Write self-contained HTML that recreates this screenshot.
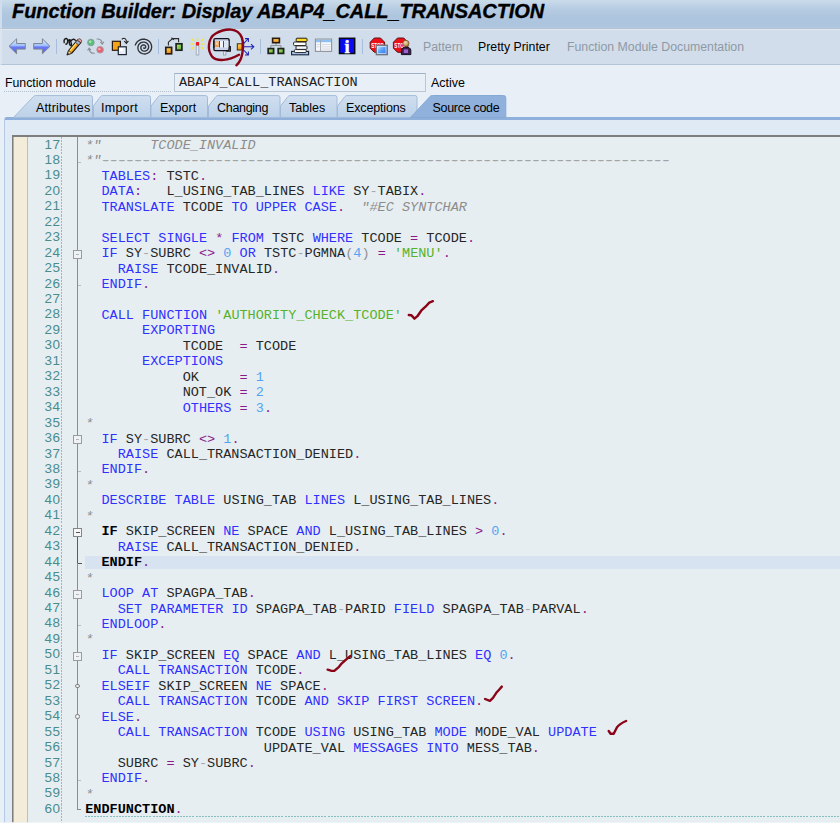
<!DOCTYPE html>
<html><head><meta charset="utf-8"><title>Function Builder: Display ABAP4_CALL_TRANSACTION</title>
<style>
*{box-sizing:border-box;margin:0;padding:0}
html,body{width:840px;height:823px;overflow:hidden}
body{position:relative;background:#e8eff6;font-family:"Liberation Sans",sans-serif;font-size:12px;color:#000}
.abs{position:absolute}
#title{position:absolute;left:0;top:0;width:840px;height:29px;background:linear-gradient(#cadcea 0%,#c2d5e7 14%,#b6cce3 32%,#afc6df 55%,#adc4de 94%,#b6cbe1 100%);border-bottom:1px solid #b2c2d3;border-left:2px solid #cfdded}
#title h1{position:absolute;left:10px;top:-3px;font:italic bold 20px/28px "Liberation Sans",sans-serif;white-space:nowrap;letter-spacing:-0.08px;-webkit-text-stroke:0.35px #000}
#tb{position:absolute;left:0;top:29px;width:840px;height:36px;background:#d1ddea;border-top:1px solid #e0e9f2;border-bottom:1px solid #b4c4d8;border-left:2px solid #dbe4ef}
#tb .sep{position:absolute;top:9px;width:1px;height:16px;background:#a8bcd6}
#tb svg{position:absolute;top:8px;overflow:visible}
#tb .t{position:absolute;top:9px;margin-left:-2px;font-size:12.3px;line-height:16px;white-space:nowrap}
.gray{color:#8f99a6}
#fm{position:absolute;left:5px;top:75px;font-size:12.3px;line-height:16px}
#fmline{position:absolute;left:4px;top:91px;width:167px;height:0;border-top:1px dotted #b4bfcc}
#inp{position:absolute;left:174px;top:73px;width:252px;height:19px;border:1px solid #b9c6d6;border-top-color:#9fb0c6;background:#e9eff6;font:13.54px/17px "Liberation Mono",monospace;padding-left:4px;color:#222}
#act{position:absolute;left:431px;top:75px;font-size:12.5px;line-height:16px}
#tabs{position:absolute;left:0;top:95px;width:840px;height:26px}
#tabs .tx{position:absolute;top:5px;font-size:12.5px;line-height:16px;white-space:nowrap}
#panel{position:absolute;left:4px;top:117px;width:840px;height:710px;background:#dfeaf5;border-top:3px solid #8fb0da;border-left:1px solid #b3c9e4;border-top-left-radius:3px}
#ed{position:absolute;left:12px;top:135px;width:835px;height:700px;background:#e7eef1;border-top:2px solid #7e7e7e;border-left:1px solid #7e7e7e}
#beige{position:absolute;left:13px;top:137px;width:15px;border-left:1px solid #b5b0a4;height:700px;background:#f3ecd8;border-right:1px solid #bebeba}
#dots{position:absolute;left:61px;top:137px;width:1px;height:700px;background:repeating-linear-gradient(to bottom,#8ac3be 0,#8ac3be 2px,transparent 2px,transparent 3.1px)}
#vline{position:absolute;left:77px;top:137px;width:1px;height:calc(808.6px - 137px);background:#8c8c8c}
.ln{position:absolute;left:28px;width:32.3px;margin-top:-1.5px;height:15px;text-align:right;font:13.5px/15px "Liberation Sans",sans-serif;color:#4a8c8c;letter-spacing:0.4px}
.cl{position:absolute;left:85.2px;height:15px;font:13.54px/15px "Liberation Mono",monospace;color:#262626;white-space:pre}
.cl .k{color:#3030ff}
.cl .p{color:#8a1a8a;font-style:normal}
.cl .r{color:#8e9294;font-style:normal}
.cl .n{color:#55a4f2;text-decoration:none}
.cl .h{color:#a4a8aa}
.cl .s{color:#56b22a;text-decoration:none}
.cl i{color:#8c8c8c;font-style:italic}
.cl i.d{position:relative;top:0px;font-style:normal;color:#a2a5a7;text-shadow:1px 0 0 #a2a5a7,-0.8px 0 0 #a2a5a7}
.cl b{color:#000;font-weight:bold}
.curbg{position:absolute;left:85px;width:760px;height:13px;margin-top:1px;background:#d8e3f1}
.fbox{position:absolute;left:73px;width:9px;height:9px;border:1px solid #9c9c9c;background:#eef2f4}
.fbox span{position:absolute;left:2px;top:3px;width:3px;height:1px;background:#b5b5b5}
.fbox.act{border-color:#858585;background:#f4f6f8}
.fbox.act span{left:1.5px;width:4px;background:#555}
.ftick.act{background:#555;width:3.5px}
#vact{position:absolute;left:77px;width:1px;background:#5c5c5c}
.ftick{position:absolute;left:78px;width:3px;height:1px;background:#b9bdbf}
.fdia{position:absolute;left:75.3px;width:4.4px;height:4.4px;border:1px solid #808080;border-radius:50%;background:#eef2f4}
#endl{position:absolute;left:77px;width:4px;height:1px;background:#8a8a8a}
#bdash{position:absolute;left:85px;top:816px;width:760px;height:1px;background:repeating-linear-gradient(to right,#86c0bc 0,#86c0bc 2px,transparent 2px,transparent 3.07px)}
#bot{position:absolute;left:0;top:822px;width:840px;height:1px;background:#f1f5f8;opacity:.8}
</style></head><body>
<div id="title"><h1>Function Builder: Display ABAP4_CALL_TRANSACTION</h1></div>
<div id="tb">
<span class="t gray" style="left:423px">Pattern</span>
<span class="t" style="left:478px">Pretty Printer</span>
<span class="t gray" style="left:567px">Function Module Documentation</span>
</div>
<svg id="ic" class="abs" style="left:0;top:0" width="840" height="70" viewBox="0 0 840 70">
<defs>
<linearGradient id="ga" x1="0" y1="0" x2="0" y2="1"><stop offset="0" stop-color="#dfeaff"/><stop offset=".45" stop-color="#9fc2fb"/><stop offset=".55" stop-color="#6a78f4"/><stop offset="1" stop-color="#5a62ee"/></linearGradient>
<linearGradient id="gor" x1="0" y1="0" x2="0" y2="1"><stop offset="0" stop-color="#ffd85a"/><stop offset="1" stop-color="#f08a10"/></linearGradient>
<linearGradient id="ggr" x1="0" y1="0" x2="1" y2="1"><stop offset="0" stop-color="#c5ec6a"/><stop offset="1" stop-color="#4aa838"/></linearGradient>
<linearGradient id="gsc" x1="0" y1="0" x2="1" y2="1"><stop offset="0" stop-color="#e8f4ff"/><stop offset=".5" stop-color="#5aa0f8"/><stop offset="1" stop-color="#2a6ae8"/></linearGradient>
<radialGradient id="ghd" cx=".4" cy=".35" r=".7"><stop offset="0" stop-color="#f6dcae"/><stop offset="1" stop-color="#a87c40"/></radialGradient>
</defs>
<g stroke="#a6bddb" stroke-width="1"><line x1="56.5" y1="39" x2="56.5" y2="54"/><line x1="158.5" y1="39" x2="158.5" y2="54"/><line x1="260.5" y1="39" x2="260.5" y2="54"/><line x1="362.5" y1="39" x2="362.5" y2="54"/></g>
<!-- back / forward -->
<path d="M9 46.3 L16.6 38.8 V43.5 H25.3 V49.1 H16.6 V53.8 Z" fill="url(#ga)" stroke="#7c8694" stroke-width="1" stroke-linejoin="round"/>
<path d="M50 46.3 L42.4 38.8 V43.5 H33.7 V49.1 H42.4 V53.8 Z" fill="url(#ga)" stroke="#7c8694" stroke-width="1" stroke-linejoin="round"/>
<!-- pencil with glasses -->
<g>
<path d="M64.2 42.5 c-1-3.5 2.2-5.2 3.2-3 c1 2.2-.4 5-1.6 4.6 M68 40.8 c.8-1.6 2.4-1.4 2.9.2 M70.6 41 c.6 2 1.4 4 .6 4.6 c-1.2.6-2.4-2.4-1.8-4.6 M71.3 40.5 c1.4-1.8 3.4-1.4 4-.2" fill="none" stroke="#1c1c1c" stroke-width="1.45" stroke-linecap="round"/>
<path d="M67.2 54.8 L68.6 50.6 L77.4 40.2 L80.8 42.6 L71.8 53.2 Z" fill="#f6a61c" stroke="#20160a" stroke-width="1.2" stroke-linejoin="round"/>
<path d="M69.4 50.2 L77.4 40.8 L78.5 41.6 L70.4 51.1 Z" fill="#ffe36a"/>
<path d="M75.4 42.6 L77.4 40.2 L80.8 42.6 L78.8 45 Z" fill="#9db4d8" stroke="#3a2a14" stroke-width=".7"/>
<path d="M77.4 40.2 L78.6 38.9 C79.8 38.2 81.8 39.8 81.6 41.2 L80.8 42.6 Z" fill="#f0a0a8" stroke="#3a2a14" stroke-width=".7"/>
<path d="M67.2 54.8 L68.6 50.6 L71.8 53.2 Z" fill="#f1d9a6" stroke="#3a2a14" stroke-width=".7"/>
<path d="M67.2 54.8 L67.8 53 L69.2 54.1 Z" fill="#111"/>
</g>
<!-- circles -->
<g>
<circle cx="90.9" cy="42.5" r="3.3" fill="#58bf76" stroke="#86a09c" stroke-width="1"/>
<circle cx="90.2" cy="41.8" r="1.2" fill="#a6e6b0"/>
<circle cx="100.1" cy="49.8" r="3.3" fill="#e85f70" stroke="#ad9aa2" stroke-width="1"/>
<circle cx="99.4" cy="49.1" r="1.2" fill="#f8b8c0"/>
<path d="M96.6 39 c3.2-.2 5.4 1.6 5.6 4.4" fill="none" stroke="#8a8f96" stroke-width="1.1"/>
<path d="M100.4 42.2 l1.9 2 l1.5-2.4" fill="none" stroke="#8a8f96" stroke-width="1.1"/>
<path d="M94.8 53.3 c-3.2.2-5.4-1.6-5.6-4.4" fill="none" stroke="#8a8f96" stroke-width="1.1"/>
<path d="M91 50.1 l-1.9-2 l-1.5 2.4" fill="none" stroke="#8a8f96" stroke-width="1.1"/>
</g>
<!-- squares -->
<g>
<rect x="112.4" y="41.3" width="8" height="9" fill="#f6a31a" stroke="#2a1c12" stroke-width="1.2"/>
<rect x="118.3" y="46.8" width="8" height="7.8" fill="#e4effb" stroke="#20242e" stroke-width="1.2"/>
<rect x="119.5" y="48" width="3.5" height="3" fill="#fff"/>
<path d="M121.8 39.2 c2.6-2 4.8-.6 4.6 3.2" fill="none" stroke="#222" stroke-width="1.1"/>
<path d="M124.2 41 l2.2 2.4 l2-2.6" fill="none" stroke="#222" stroke-width="1.1"/>
</g>
<!-- spiral -->
<path d="M135.3 45 L136 43.5 L137 42.1 L138.2 41 L139.7 40.1 L141.2 39.5 L142.9 39.2 L144.5 39.2 L146.1 39.6 L147.6 40.2 L148.9 41.1 L149.9 42.1 L150.8 43.4 L151.3 44.8 L151.6 46.2 L151.6 47.7 L151.3 49.1 L150.7 50.4 L149.9 51.5 L148.9 52.5 L147.7 53.2 L146.4 53.7 L145 54 L143.7 53.9 L142.4 53.7 L141.2 53.2 L140.1 52.4 L139.2 51.6 L138.5 50.5 L138.1 49.4 L137.9 48.2 L137.9 47.1 L138.2 45.9 L138.6 44.9 L139.3 44 L140.1 43.2 L141 42.7 L142 42.3 L143.1 42.1 L144.2 42.1 L145.2 42.3 L146.1 42.7 L146.9 43.3 L147.6 44 L148.1 44.8 L148.5 45.6 L148.6 46.5 L148.6 47.4 L148.4 48.3 L148.1 49 L147.5 49.7 L146.9 50.3 L146.2 50.7 L145.5 51 L144.7 51.1 L143.9 51.1 L143.2 50.9 L142.5 50.6 L142 50.2 L141.5 49.7 L141.1 49.1 L140.9 48.5 L140.8 47.9 L140.9 47.3 L141 46.7 L141.3 46.2 L141.7 45.8 L142.1 45.4 L142.5 45.2 L143 45 L143.5 45 L144 45 L144.5 45.1 L144.8 45.3 L145.2 45.6 L145.4 45.9 L145.6 46.3 L145.7 46.6 L145.7 47 L145.6 47.3 L145.5 47.6 L145.3 47.8 L145.1 48 L144.9 48.2 L144.7 48.2 L144.4 48.3 L144.2 48.2 L144 48.2 L143.9 48.1 L143.7 47.9 L143.7 47.8" fill="none" stroke="#30333a" stroke-width="1.35" stroke-linecap="round" stroke-linejoin="round"/>
<!-- boxes -->
<g>
<path d="M168.4 45.4 V42.2 L172.6 38.6 L173.8 39.8 M172.6 38.6 L171.4 37.8 M172.6 38.6 H178.6 V42.2" fill="none" stroke="#2a2a2a" stroke-width="1.1"/>
<rect x="165.8" y="47.4" width="5.8" height="6.4" fill="url(#gor)" stroke="#2a1c12" stroke-width="1.7"/>
<rect x="176.1" y="43.8" width="5.8" height="6.4" fill="url(#ggr)" stroke="#1e241c" stroke-width="1.7"/>
</g>
<!-- wand -->
<g>
<g stroke="#f6e43c" stroke-width="1.4" stroke-linecap="round">
<line x1="197.5" y1="38" x2="197.5" y2="40.5"/><line x1="191.5" y1="38.8" x2="193.8" y2="41"/><line x1="203.5" y1="38.8" x2="201.2" y2="41"/>
<line x1="191" y1="44" x2="193.6" y2="44"/><line x1="204" y1="44" x2="201.4" y2="44"/>
<line x1="191.5" y1="49.2" x2="193.8" y2="47"/><line x1="203.5" y1="49.2" x2="201.2" y2="47"/>
</g>
<rect x="196.2" y="45.4" width="2.6" height="9.6" fill="#e6ecf4" stroke="#9aa4b2" stroke-width=".8"/>
<rect x="195.9" y="42" width="3.2" height="3.6" rx="1" fill="#f01818"/>
</g>
<!-- layout icon -->
<g>
<rect x="213.9" y="38.6" width="15.2" height="12" rx="1.3" fill="#c6d0ea" stroke="#15151b" stroke-width="1.4"/>
<rect x="214.6" y="41" width="13.8" height="6.4" fill="#f1f4fa"/>
<rect x="213.1" y="40.8" width="1.7" height="7" fill="#15151b"/>
<rect x="214.8" y="41.3" width="4" height="5.8" fill="#ee9f4c"/>
<rect x="215.6" y="42.2" width="2.2" height="2.6" fill="#f9d3a4"/>
<rect x="219" y="41" width=".9" height="6.4" fill="#3a3a44"/>
<rect x="223" y="41" width=".9" height="6.4" fill="#3a3a44"/>
<rect x="224.2" y="41.6" width="3.6" height="5.2" fill="#d9e4f6"/>
<path d="M229.1 46.6 H230.3 V51.2 H226" fill="none" stroke="#15151b" stroke-width="1.3"/>
<rect x="223.3" y="51.6" width="2.6" height="3.4" fill="#e6ebf3" stroke="#7a8296" stroke-width=".6"/>
</g>
<!-- arrows icon -->
<g>
<rect x="237.3" y="43.8" width="4.8" height="6.2" fill="url(#gor)" stroke="#3a2a14" stroke-width="1"/>
<g fill="none" stroke="#2222b8" stroke-width="1.05">
<path d="M243 46.8 H253.6 M251 44.2 L253.8 46.8 L251 49.4"/>
<path d="M243.6 43.6 L248 39 M245 38.6 H248.4 V42"/>
<path d="M243.6 50 L248 54.6 M245 55 H248.4 V51.6"/>
</g>
</g>
<!-- hierarchy -->
<g>
<path d="M276 43 V45.6 M270.8 48 V45.6 H281 V48" fill="none" stroke="#8a8f98" stroke-width="1"/>
<rect x="272.600" y="38.300" width="6.800" height="4.400" fill="url(#gor)" stroke="#2a1c12" stroke-width="1.600"/>
<rect x="268.200" y="48.600" width="5.400" height="4.800" fill="url(#ggr)" stroke="#1e241c" stroke-width="1.700"/>
<rect x="278.200" y="48.600" width="5.400" height="4.800" fill="url(#ggr)" stroke="#1e241c" stroke-width="1.700"/>
</g>
<!-- stack -->
<g>
<rect x="291.6" y="51.4" width="17" height="3.4" fill="#a8c8ee" stroke="#16203a" stroke-width="1.1"/>
<rect x="294.4" y="49.6" width="11.8" height="3" rx="1" fill="#fff" stroke="#222" stroke-width="1"/>
<rect x="296" y="45.8" width="11" height="3.6" rx="1" fill="#f4f8ff" stroke="#222" stroke-width="1"/>
<rect x="293.6" y="42" width="12.4" height="3.6" rx="1" fill="#fff" stroke="#222" stroke-width="1"/>
<rect x="296.2" y="38.2" width="10.8" height="3.4" rx=".8" fill="#fadc28" stroke="#2a1c12" stroke-width="1"/>
</g>
<!-- table -->
<g>
<rect x="315.4" y="39.1" width="16.2" height="12.3" fill="#f4f7fb" stroke="#8e9299" stroke-width="1.1"/>
<rect x="316" y="39.8" width="15" height="2.4" fill="#8ec0f4"/>
<line x1="320.6" y1="39.6" x2="320.6" y2="51" stroke="#a4a8ae" stroke-width="1"/>
<g stroke="#c8ccd2" stroke-width=".7"><line x1="322" y1="44.5" x2="330.5" y2="44.5"/><line x1="322" y1="46.8" x2="330.5" y2="46.8"/><line x1="322" y1="49.1" x2="330.5" y2="49.1"/><line x1="316.6" y1="44.5" x2="319.6" y2="44.5"/><line x1="316.6" y1="46.8" x2="319.6" y2="46.8"/></g>
</g>
<!-- info -->
<g>
<rect x="339.5" y="38.3" width="15.2" height="15.2" fill="#0a0af4" stroke="#0a0a14" stroke-width="1.5"/>
<text x="347.100" y="52.600" text-anchor="middle" font-family="Liberation Serif,serif" font-weight="bold" font-size="18.500" fill="#fff" stroke="#fff" stroke-width=".5">i</text>
</g>
<!-- stop 1 -->
<g>
<path d="M374.3 38 H380.5 L384.6 42.2 V48.2 L380.5 52.3 H374.3 L370.2 48.2 V42.2 Z" fill="#ee1018" stroke="#5c1414" stroke-width="1"/>
<text x="377.4" y="47.800" text-anchor="middle" font-family="Liberation Sans,sans-serif" font-weight="bold" font-size="7" fill="#fff" textLength="12.500" lengthAdjust="spacingAndGlyphs">STOP</text>
<rect x="376.3" y="45.3" width="11" height="9.4" fill="url(#gsc)" stroke="#70767e" stroke-width="1.3"/>
<rect x="377.6" y="46.6" width="8.4" height="6.8" fill="none" stroke="#e4eaf2" stroke-width=".7"/>
</g>
<!-- stop 2 -->
<g>
<path d="M397.5 38 H403.7 L407.8 42.2 V48.2 L403.7 52.3 H397.5 L393.4 48.2 V42.2 Z" fill="#ee1018" stroke="#5c1414" stroke-width="1"/>
<text x="400.6" y="47.800" text-anchor="middle" font-family="Liberation Sans,sans-serif" font-weight="bold" font-size="7" fill="#fff" textLength="12.500" lengthAdjust="spacingAndGlyphs">STOP</text>
<path d="M401.4 54.6 V50.4 C401.4 48.2 403.4 47.2 406 47.2 C408.8 47.2 410.8 48.2 410.8 50.4 V54.6 Z" fill="#3a2050" stroke="#140e20" stroke-width="1"/>
<path d="M403.800 49.400 h4.200 v3.600 h-4.200z" fill="#a262cc"/>
<circle cx="405.900" cy="43.400" r="3.100" fill="url(#ghd)" stroke="#5a4020" stroke-width=".6"/>
</g>
</svg>

<div id="fm">Function module</div><div id="fmline"></div>
<div id="inp">ABAP4_CALL_TRANSACTION</div>
<div id="act">Active</div>
<div id="panel"></div>
<div id="tabs">
<svg class="abs" style="left:0;top:0" width="840" height="26" viewBox="0 95 840 26">
<defs>
<linearGradient id="gt" x1="0" y1="0" x2="0" y2="1"><stop offset="0" stop-color="#d0dff0"/><stop offset="1" stop-color="#bcd1e9"/></linearGradient>
</defs>
<g fill="url(#gt)" stroke="#a3bbd8" stroke-width="1">
<path d="M337.500 117.500 V106 L345 96.500 Q345.600 95.600 347 95.600 H415 Q417 95.600 417 97.500 V117.500 Z"/>
<path d="M280.500 117.500 V106 L288 96.500 Q288.600 95.600 290 95.600 H335 Q337 95.600 337 97.500 V117.500 Z"/>
<path d="M208.500 117.500 V106 L216 96.500 Q216.600 95.600 218 95.600 H278 Q280 95.600 280 97.500 V117.500 Z"/>
<path d="M151 117.500 V106 L158.500 96.500 Q159.100 95.600 160.500 95.600 H205.500 Q207.500 95.600 207.500 97.500 V117.500 Z"/>
<path d="M93.500 117.500 V106 L100.500 96.500 Q101.100 95.600 102.500 95.600 H148.500 Q150.500 95.600 150.500 97.500 V117.500 Z"/>
<path d="M13.500 117.500 L33.500 96.500 Q34.300 95.600 35.800 95.600 H90.500 Q92.500 95.600 92.500 97.500 V117.500 Z"/>
</g>
<path d="M410.500 117.500 L430 96.500 Q430.800 95.500 432.500 95.500 H503.500 Q505.800 95.500 505.800 97.800 V117.500 Z" fill="#8fb1dc" stroke="#86a9d6" stroke-width="1"/>
</svg>

<span class="tx" style="left:36px;letter-spacing:0.15px">Attributes</span>
<span class="tx" style="left:101px;letter-spacing:0.25px">Import</span>
<span class="tx" style="left:160px">Export</span>
<span class="tx" style="left:217px;letter-spacing:-0.3px">Changing</span>
<span class="tx" style="left:289px">Tables</span>
<span class="tx" style="left:346px;letter-spacing:-0.15px">Exceptions</span>
<span class="tx" style="left:432.5px;letter-spacing:-0.3px">Source code</span>
</div>
<div id="ed"></div>
<div id="beige"></div>
<div id="dots"></div>
<div id="vline"></div>
<div id="endl" style="top:808.6px"></div>
<div id="bdash"></div><div id="bot"></div>
<div id="vact" style="top:536.5px;height:26.9px"></div>
<div class="fbox" style="top:249.9px"><span></span></div>
<div class="fbox" style="top:435.3px"><span></span></div>
<div class="fbox act" style="top:528.0px"><span></span></div>
<div class="fbox" style="top:589.8px"><span></span></div>
<div class="fbox" style="top:651.6px"><span></span></div>
<div class="ftick" style="top:161.7px"></div>
<div class="ftick" style="top:285.3px"></div>
<div class="ftick" style="top:470.7px"></div>
<div class="ftick act" style="top:563.4px"></div>
<div class="ftick" style="top:625.2px"></div>
<div class="ftick" style="top:779.7px"></div>
<div class="fdia" style="top:683.5px"></div>
<div class="fdia" style="top:714.4px"></div>
<div class="ln" style="top:138.00px">17</div>
<pre class="cl" style="top:138.00px"><i>*"      TCODE_INVALID</i></pre>
<div class="ln" style="top:153.45px">18</div>
<pre class="cl" style="top:153.45px"><i>*"</i><i class="d">----------------------------------------------------------------------</i></pre>
<div class="ln" style="top:168.90px">19</div>
<pre class="cl" style="top:168.90px">  <span class="k">TABLES</span><span class="p">:</span> TSTC<span class="p">.</span></pre>
<div class="ln" style="top:184.35px">20</div>
<pre class="cl" style="top:184.35px">  <span class="k">DATA</span><span class="p">:</span>   L_USING_TAB_LINES <span class="k">LIKE</span> SY<span class="h">-</span>TABIX<span class="p">.</span></pre>
<div class="ln" style="top:199.80px">21</div>
<pre class="cl" style="top:199.80px">  <span class="k">TRANSLATE</span> TCODE <span class="k">TO</span> <span class="k">UPPER</span> <span class="k">CASE</span><span class="p">.</span><i>  "#EC SYNTCHAR</i></pre>
<div class="ln" style="top:215.25px">22</div>
<div class="ln" style="top:230.70px">23</div>
<pre class="cl" style="top:230.70px">  <span class="k">SELECT</span> <span class="k">SINGLE</span> <span class="p">*</span> <span class="k">FROM</span> TSTC <span class="k">WHERE</span> TCODE <span class="p">=</span> TCODE<span class="p">.</span></pre>
<div class="ln" style="top:246.15px">24</div>
<pre class="cl" style="top:246.15px">  <span class="k">IF</span> SY<span class="h">-</span>SUBRC <span class="p">&lt;</span><span class="p">&gt;</span> <span class="n">0</span> <span class="k">OR</span> TSTC<span class="h">-</span>PGMNA<span class="r">(</span><span class="n">4</span><span class="r">)</span> <span class="p">=</span> <span class="s">'MENU'</span><span class="p">.</span></pre>
<div class="ln" style="top:261.60px">25</div>
<pre class="cl" style="top:261.60px">    <span class="k">RAISE</span> TCODE_INVALID<span class="p">.</span></pre>
<div class="ln" style="top:277.05px">26</div>
<pre class="cl" style="top:277.05px">  <span class="k">ENDIF</span><span class="p">.</span></pre>
<div class="ln" style="top:292.50px">27</div>
<div class="ln" style="top:307.95px">28</div>
<pre class="cl" style="top:307.95px">  <span class="k">CALL</span> <span class="k">FUNCTION</span> <span class="s">'AUTHORITY_CHECK_TCODE'</span></pre>
<div class="ln" style="top:323.40px">29</div>
<pre class="cl" style="top:323.40px">       <span class="k">EXPORTING</span></pre>
<div class="ln" style="top:338.85px">30</div>
<pre class="cl" style="top:338.85px">            TCODE  <span class="p">=</span> TCODE</pre>
<div class="ln" style="top:354.30px">31</div>
<pre class="cl" style="top:354.30px">       <span class="k">EXCEPTIONS</span></pre>
<div class="ln" style="top:369.75px">32</div>
<pre class="cl" style="top:369.75px">            OK     <span class="p">=</span> <span class="n">1</span></pre>
<div class="ln" style="top:385.20px">33</div>
<pre class="cl" style="top:385.20px">            NOT_OK <span class="p">=</span> <span class="n">2</span></pre>
<div class="ln" style="top:400.65px">34</div>
<pre class="cl" style="top:400.65px">            <span class="k">OTHERS</span> <span class="p">=</span> <span class="n">3</span><span class="p">.</span></pre>
<div class="ln" style="top:416.10px">35</div>
<pre class="cl" style="top:416.10px"><i>*</i></pre>
<div class="ln" style="top:431.55px">36</div>
<pre class="cl" style="top:431.55px">  <span class="k">IF</span> SY<span class="h">-</span>SUBRC <span class="p">&lt;</span><span class="p">&gt;</span> <span class="n">1</span><span class="p">.</span></pre>
<div class="ln" style="top:447.00px">37</div>
<pre class="cl" style="top:447.00px">    <span class="k">RAISE</span> CALL_TRANSACTION_DENIED<span class="p">.</span></pre>
<div class="ln" style="top:462.45px">38</div>
<pre class="cl" style="top:462.45px">  <span class="k">ENDIF</span><span class="p">.</span></pre>
<div class="ln" style="top:477.90px">39</div>
<pre class="cl" style="top:477.90px"><i>*</i></pre>
<div class="ln" style="top:493.35px">40</div>
<pre class="cl" style="top:493.35px">  <span class="k">DESCRIBE</span> <span class="k">TABLE</span> USING_TAB <span class="k">LINES</span> L_USING_TAB_LINES<span class="p">.</span></pre>
<div class="ln" style="top:508.80px">41</div>
<pre class="cl" style="top:508.80px"><i>*</i></pre>
<div class="ln" style="top:524.25px">42</div>
<pre class="cl" style="top:524.25px">  <b>IF</b> SKIP_SCREEN <span class="k">NE</span> SPACE <span class="k">AND</span> L_USING_TAB_LINES <span class="p">&gt;</span> <span class="n">0</span><span class="p">.</span></pre>
<div class="ln" style="top:539.70px">43</div>
<pre class="cl" style="top:539.70px">    <span class="k">RAISE</span> CALL_TRANSACTION_DENIED<span class="p">.</span></pre>
<div class="ln" style="top:555.15px">44</div>
<div class="curbg" style="top:555.15px"></div>
<pre class="cl" style="top:555.15px">  <b>ENDIF</b><span class="p">.</span></pre>
<div class="ln" style="top:570.60px">45</div>
<pre class="cl" style="top:570.60px"><i>*</i></pre>
<div class="ln" style="top:586.05px">46</div>
<pre class="cl" style="top:586.05px">  <span class="k">LOOP</span> <span class="k">AT</span> SPAGPA_TAB<span class="p">.</span></pre>
<div class="ln" style="top:601.50px">47</div>
<pre class="cl" style="top:601.50px">    <span class="k">SET</span> <span class="k">PARAMETER</span> <span class="k">ID</span> SPAGPA_TAB<span class="h">-</span>PARID <span class="k">FIELD</span> SPAGPA_TAB<span class="h">-</span>PARVAL<span class="p">.</span></pre>
<div class="ln" style="top:616.95px">48</div>
<pre class="cl" style="top:616.95px">  <span class="k">ENDLOOP</span><span class="p">.</span></pre>
<div class="ln" style="top:632.40px">49</div>
<pre class="cl" style="top:632.40px"><i>*</i></pre>
<div class="ln" style="top:647.85px">50</div>
<pre class="cl" style="top:647.85px">  <span class="k">IF</span> SKIP_SCREEN <span class="k">EQ</span> SPACE <span class="k">AND</span> L_USING_TAB_LINES <span class="k">EQ</span> <span class="n">0</span><span class="p">.</span></pre>
<div class="ln" style="top:663.30px">51</div>
<pre class="cl" style="top:663.30px">    <span class="k">CALL</span> <span class="k">TRANSACTION</span> TCODE<span class="p">.</span></pre>
<div class="ln" style="top:678.75px">52</div>
<pre class="cl" style="top:678.75px">  <span class="k">ELSEIF</span> SKIP_SCREEN <span class="k">NE</span> SPACE<span class="p">.</span></pre>
<div class="ln" style="top:694.20px">53</div>
<pre class="cl" style="top:694.20px">    <span class="k">CALL</span> <span class="k">TRANSACTION</span> TCODE <span class="k">AND</span> <span class="k">SKIP</span> <span class="k">FIRST</span> <span class="k">SCREEN</span><span class="p">.</span></pre>
<div class="ln" style="top:709.65px">54</div>
<pre class="cl" style="top:709.65px">  <span class="k">ELSE</span><span class="p">.</span></pre>
<div class="ln" style="top:725.10px">55</div>
<pre class="cl" style="top:725.10px">    <span class="k">CALL</span> <span class="k">TRANSACTION</span> TCODE <span class="k">USING</span> USING_TAB <span class="k">MODE</span> MODE_VAL <span class="k">UPDATE</span></pre>
<div class="ln" style="top:740.55px">56</div>
<pre class="cl" style="top:740.55px">                      UPDATE_VAL <span class="k">MESSAGES</span> <span class="k">INTO</span> MESS_TAB<span class="p">.</span></pre>
<div class="ln" style="top:756.00px">57</div>
<pre class="cl" style="top:756.00px">    SUBRC <span class="p">=</span> SY<span class="h">-</span>SUBRC<span class="p">.</span></pre>
<div class="ln" style="top:771.45px">58</div>
<pre class="cl" style="top:771.45px">  <span class="k">ENDIF</span><span class="p">.</span></pre>
<div class="ln" style="top:786.90px">59</div>
<pre class="cl" style="top:786.90px"><i>*</i></pre>
<div class="ln" style="top:802.35px">60</div>
<pre class="cl" style="top:802.35px"><b>ENDFUNCTION</b><span class="p">.</span></pre>
<svg class="abs" style="left:0;top:0;pointer-events:none" width="840" height="823" viewBox="0 0 840 823">
<g fill="none" stroke="#8a0418" stroke-width="2.4" stroke-linecap="round" stroke-linejoin="round">
<path d="M408.8 315 L411.2 315.2 Q413 317 414.5 318.7 L417.4 316.2 L421.2 310.7 L425.5 306.7 L429.3 302.6 L432.9 301.2"/>
<path d="M327.6 669.7 L331 670.7 L334.3 670.9 L339 666.8 L341 664.2 L345.7 659.9 L350.5 655.9"/>
<path d="M485.1 699 L489.9 700.9 L493 697.8 L496.3 692.8 L499.1 689.7 L501.8 686.6"/>
<path d="M608.7 731 L610.6 733.7 L613.7 733.7 L617 727.2 Q618.6 725.4 620.4 724.1 Q623 722.2 626.1 721"/>
<path d="M239 54.8 C235 57 229 59.5 223.6 59.9 C218 60.3 214 59 212 56.5 C209.5 53 208.6 48 209 45 C209.5 39 212 35.5 215.7 33.5 C220 31 226 29.3 231 29.6 C236 30 240 33 241.8 37.5 C243.3 42 243.3 48 242.3 53.5 C241.5 58 239.5 62.5 236.4 65.3"/>
</g>
</svg>

</body></html>
